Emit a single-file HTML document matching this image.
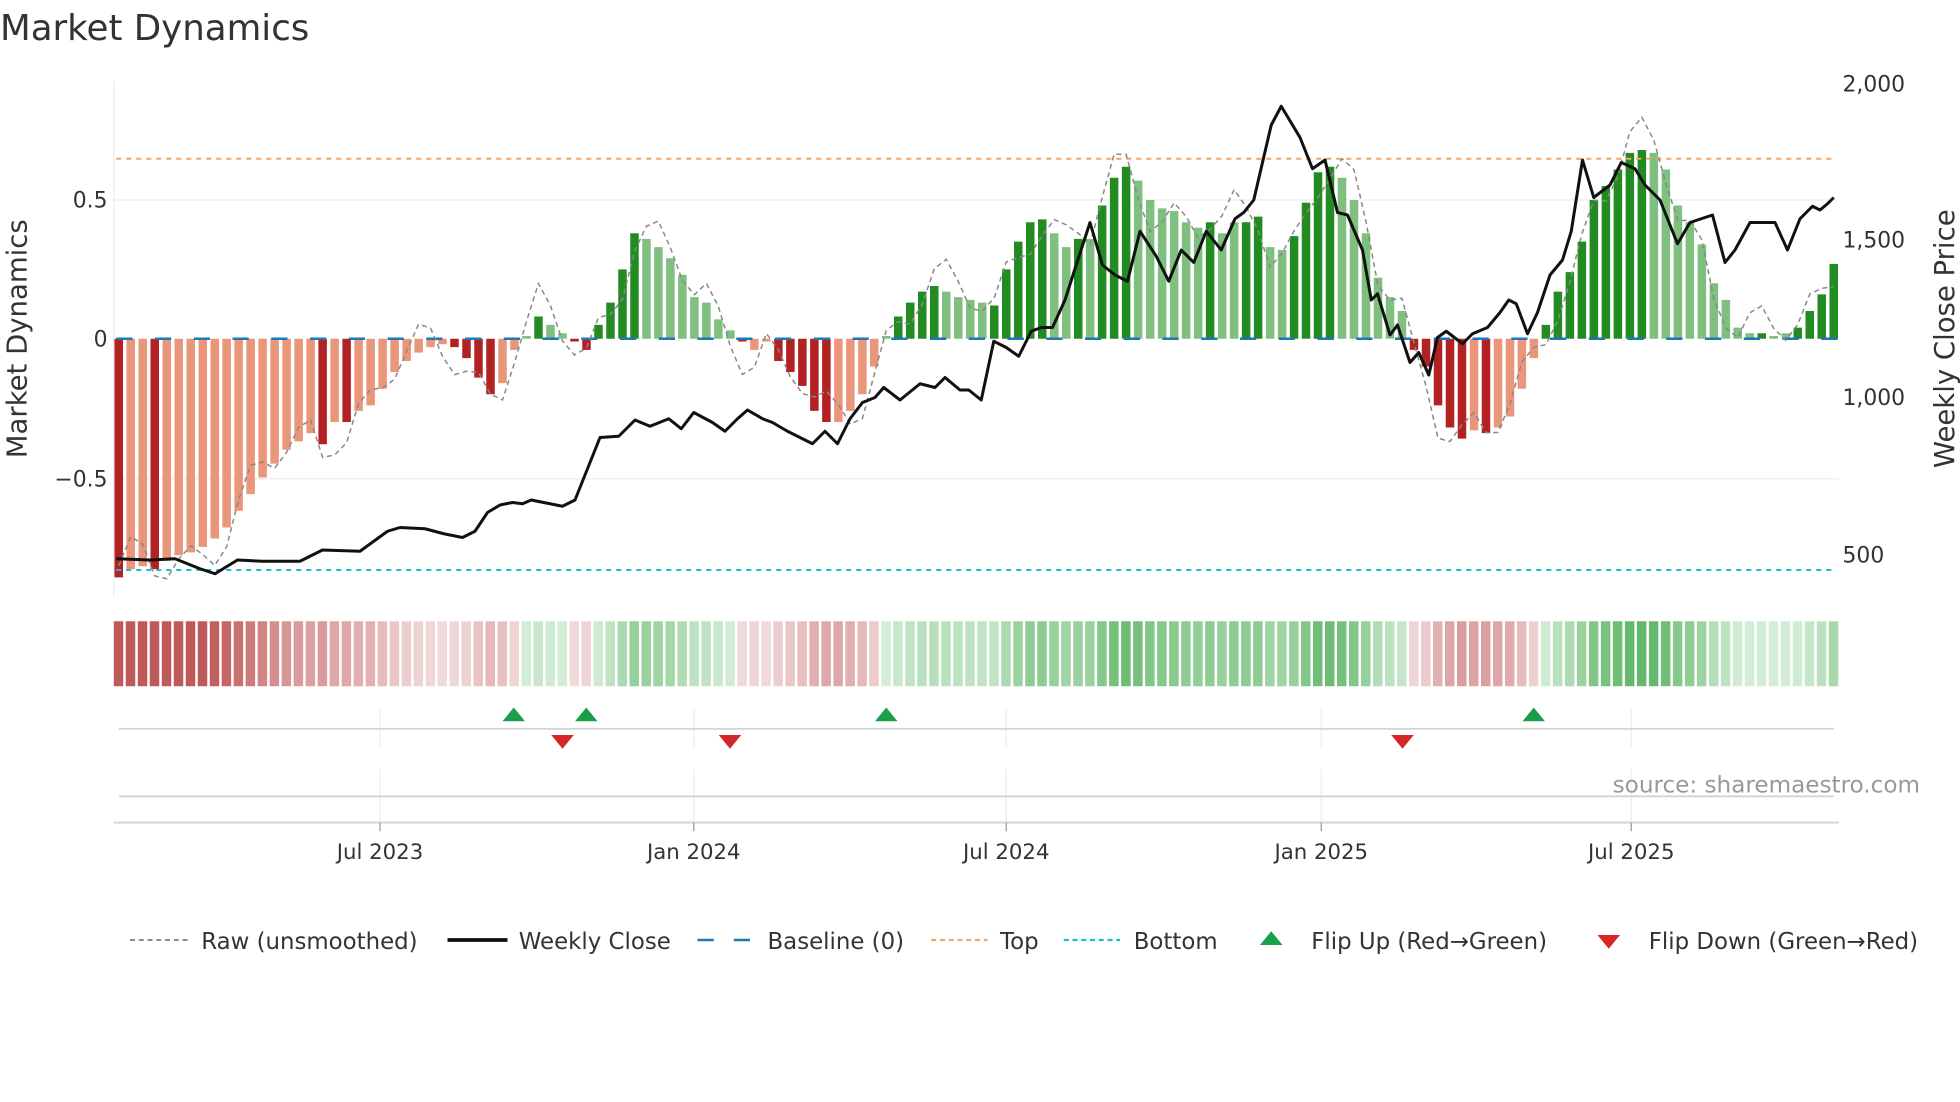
<!DOCTYPE html>
<html><head><meta charset="utf-8"><style>
html,body{margin:0;padding:0;background:#fff;width:1960px;height:1102px;overflow:hidden}
svg{display:block}
text{font-family:"DejaVu Sans","Liberation Sans",sans-serif;fill:#333}
</style></head><body>
<svg id="s" width="1960" height="1102" viewBox="0 0 1568 881.6" xmlns="http://www.w3.org/2000/svg">
<text x="0" y="32" font-size="28.5">Market Dynamics</text>
<line x1="91" y1="65" x2="91" y2="478" stroke="#eee" stroke-width="1"/>
<line x1="91" y1="160" x2="1471" y2="160" stroke="#eee"/>
<line x1="91" y1="383" x2="1471" y2="383" stroke="#eee"/>
<g id="bars"></g>
<line x1="93" y1="271" x2="1471" y2="271" stroke="#1f77b4" stroke-width="2" stroke-dasharray="13,18"/>
<line x1="93" y1="127" x2="1466" y2="127" stroke="#f4a460" stroke-width="1.6" stroke-dasharray="4,4"/>
<line x1="93" y1="456" x2="1466" y2="456" stroke="#17becf" stroke-width="1.6" stroke-dasharray="4,4"/>
<polyline id="raw" fill="none" stroke="#888" stroke-width="1.2" stroke-dasharray="4,3"/>
<polyline id="price" fill="none" stroke="#111" stroke-width="2.4" stroke-linejoin="round"/>
<g font-size="17.5">
<text x="86" y="166" text-anchor="end">0.5</text>
<text x="86" y="277" text-anchor="end">0</text>
<text x="86" y="389" text-anchor="end">−0.5</text>
<text x="1474" y="73">2,000</text>
<text x="1474" y="198">1,500</text>
<text x="1474" y="324">1,000</text>
<text x="1474" y="450">500</text>
</g>
<text transform="translate(21,271) rotate(-90)" font-size="22" text-anchor="middle">Market Dynamics</text>
<text transform="translate(1563,271) rotate(-90)" font-size="22" text-anchor="middle">Weekly Close Price</text>
<g id="heat"></g>
<g stroke="#eee" stroke-width="1">
<line x1="304" y1="567" x2="304" y2="598"/><line x1="555" y1="567" x2="555" y2="598"/><line x1="805" y1="567" x2="805" y2="598"/><line x1="1057" y1="567" x2="1057" y2="598"/><line x1="1305" y1="567" x2="1305" y2="598"/>
<line x1="304" y1="615" x2="304" y2="658"/><line x1="555" y1="615" x2="555" y2="658"/><line x1="805" y1="615" x2="805" y2="658"/><line x1="1057" y1="615" x2="1057" y2="658"/><line x1="1305" y1="615" x2="1305" y2="658"/>
</g>
<line x1="95" y1="583" x2="1467" y2="583" stroke="#d3d3d3" stroke-width="1.5"/>
<line x1="95" y1="637" x2="1467" y2="637" stroke="#d3d3d3" stroke-width="1.5"/>
<line x1="91" y1="658" x2="1471" y2="658" stroke="#d3d3d3" stroke-width="1.5"/>
<g stroke="#999"><line x1="304" y1="658" x2="304" y2="665"/><line x1="555" y1="658" x2="555" y2="665"/><line x1="805" y1="658" x2="805" y2="665"/><line x1="1057" y1="658" x2="1057" y2="665"/><line x1="1305" y1="658" x2="1305" y2="665"/></g>
<g fill="#1a9e4a"><path d="M411,566 l-9,11 h18z"/><path d="M469,566 l-9,11 h18z"/><path d="M709,566 l-9,11 h18z"/><path d="M1227,566 l-9,11 h18z"/></g>
<g fill="#d62728"><path d="M450,599 l-9,-11 h18z"/><path d="M584,599 l-9,-11 h18z"/><path d="M1122,599 l-9,-11 h18z"/></g>
<text x="1536" y="634" font-size="18.5" text-anchor="end" style="fill:#999">source: sharemaestro.com</text>
<g font-size="17" text-anchor="middle">
<text x="304" y="687">Jul 2023</text><text x="555" y="687">Jan 2024</text><text x="805" y="687">Jul 2024</text><text x="1057" y="687">Jan 2025</text><text x="1305" y="687">Jul 2025</text>
</g>
<g font-size="18.3">
<line x1="104" y1="752" x2="150" y2="752" stroke="#888" stroke-width="1.5" stroke-dasharray="4,3"/><text x="161" y="759">Raw (unsmoothed)</text>
<line x1="358" y1="752" x2="406" y2="752" stroke="#111" stroke-width="3"/><text x="415" y="759">Weekly Close</text>
<line x1="558" y1="752" x2="603" y2="752" stroke="#1f77b4" stroke-width="2" stroke-dasharray="13,16"/><text x="614" y="759">Baseline (0)</text>
<line x1="745" y1="752" x2="790" y2="752" stroke="#f4a460" stroke-width="1.8" stroke-dasharray="4,3"/><text x="800" y="759">Top</text>
<line x1="851" y1="752" x2="896" y2="752" stroke="#17becf" stroke-width="1.8" stroke-dasharray="4,3"/><text x="907" y="759">Bottom</text>
<path d="M1017,745 l-9,11 h18z" fill="#1a9e4a"/><text x="1049" y="759">Flip Up (Red→Green)</text>
<path d="M1287,759 l-9,-11 h18z" fill="#d62728"/><text x="1319" y="759">Flip Down (Green→Red)</text>
</g>
</svg>
<script>
var d="-.86D -.83S -.82S -.83D -.8S -.78S -.77S -.75S -.72S -.68S -.62S -.56S -.5S -.45S -.4S -.37S -.34S -.38D -.3S -.3D -.26S -.24S -.18S -.12S -.08S -.05S -.03S -.02S -.03D -.07D -.14D -.2D -.16S -.04S .01L .08G .05L .02L -.01D -.04D .05G .13G .25G .38G .36L .33L .29L .23L .15L .13L .07L .03L -.01D -.04S -.01S -.08D -.12D -.17D -.26D -.3D -.3S -.26S -.2S -.1S .01L .08G .13G .17G .19G .17L .15L .14L .13L .12G .25G .35G .42G .43G .38L .33L .36G .36L .48G .58G .62G .57L .5L .47L .46L .42L .4L .42G .38L .42L .42G .44G .33L .32L .37G .49G .6G .62G .58L .5L .38L .22L .15L .1L -.04D -.1D -.24D -.32D -.36D -.33S -.34D -.32S -.28S -.18S -.07S .05G .17G .24G .35G .5G .55G .61G .67G .68G .67L .61L .48L .42L .34L .2L .14L .04L .02L .02G .01L .02L .04G .1G .16G .27G".split(" ");
var n=d.length,x0=95,x1=1467,st=(x1-x0)/(n-1),zy=271,u=222;
var C={D:"#b22222",S:"#e9967a",G:"#228b22",L:"#7fbf7f"};
var bh="",hh="",rw=[];
for(var i=0;i<n;i++){var v=parseFloat(d[i]),c=d[i].slice(-1),x=x0+i*st;
var y=zy-v*u,h=Math.abs(v*u);h=Math.max(h,0.8);
bh+='<rect x="'+(x-3.4).toFixed(1)+'" y="'+(v>0?y:zy).toFixed(1)+'" width="6.8" height="'+h.toFixed(1)+'" fill="'+C[c]+'"/>';
var a=Math.min(Math.abs(v)/0.75,1),col;
if(v<0){col="rgb("+Math.round(242-50*a)+","+Math.round(220-130*a)+","+Math.round(220-130*a)+")";}
else{col="rgb("+Math.round(214-126*a)+","+Math.round(238-60*a)+","+Math.round(216-120*a)+")";}
hh+='<rect x="'+(x-4).toFixed(1)+'" y="497" width="7.6" height="52" fill="'+col+'"/>';
var r=v+0.07*Math.sin(i*1.3)+0.05*Math.sin(i*0.55+1);rw.push(x.toFixed(1)+","+(zy-r*u).toFixed(1));}
document.getElementById("bars").innerHTML=bh;document.getElementById("heat").innerHTML=hh;
document.getElementById("raw").setAttribute("points",rw.join(" "));
var p=[93,447,120,448,140,447,160,455,172,459,190,448,210,449,240,449,258,440,288,441,310,425,320,422,340,423,355,427,370,430,380,425,390,410,400,404,410,402,418,403,425,400,440,403,450,405,460,400,470,375,480,350,495,349,508,336,520,341,535,335,545,343,555,330,570,338,580,345,590,335,598,328,610,335,618,338,630,345,650,355,660,345,670,355,680,335,690,322,700,318,707,310,720,320,736,307,748,310,756,302,768,312,775,312,785,320,795,273,805,278,815,285,825,265,833,262,842,262,852,240,860,215,872,178,882,212,892,220,902,225,912,185,925,205,935,225,945,200,955,210,965,185,977,200,988,175,995,170,1003,160,1010,130,1017,100,1025,85,1040,110,1050,135,1060,128,1070,170,1078,172,1090,200,1097,240,1102,235,1112,268,1118,260,1128,290,1135,282,1143,300,1150,270,1157,265,1170,275,1178,267,1190,262,1200,250,1207,240,1213,243,1222,267,1230,250,1240,220,1250,208,1257,185,1266,128,1275,158,1288,148,1297,130,1308,135,1316,148,1328,160,1342,195,1352,178,1370,172,1380,210,1388,200,1400,178,1420,178,1430,200,1440,175,1450,165,1456,168,1462,163,1467,158];
var pp=[];for(var j=0;j<p.length;j+=2)pp.push(p[j]+","+p[j+1]);
document.getElementById("price").setAttribute("points",pp.join(" "));
</script>
</body></html>
